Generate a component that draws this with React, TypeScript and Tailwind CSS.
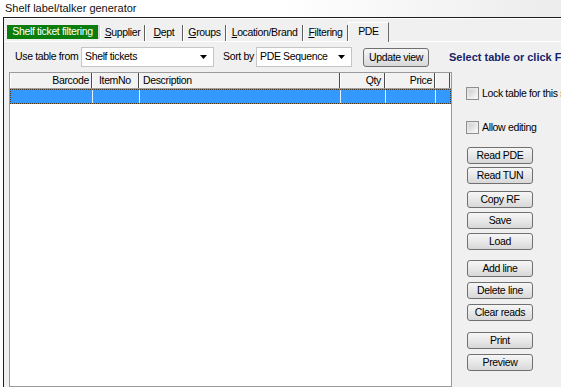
import { ReactNode } from "react";

type Tab = { label: string; accel?: number; width: number };

const tabs: Tab[] = [
  { label: "Supplier", accel: 0, width: 45 },
  { label: "Dept", accel: 0, width: 38 },
  { label: "Groups", accel: 0, width: 43 },
  { label: "Location/Brand", accel: 0, width: 77 },
  { label: "Filtering", accel: 0, width: 45 },
];

const columns = [
  { label: "Barcode", width: "w-[82px]", align: "justify-end pr-[2px]" },
  { label: "ItemNo", width: "w-[47px]", align: "justify-start pl-[6px]" },
  { label: "Description", width: "w-[201px]", align: "justify-start pl-[3px]" },
  { label: "Qty", width: "w-[45px]", align: "justify-end pr-[3px]" },
  { label: "Price", width: "w-[50px]", align: "justify-end pr-[2px]" },
  { label: "", width: "w-[15px]", align: "" },
];

// gap above each button, in px
const buttons = [
  { label: "Read PDE", gap: "mt-[13px]" },
  { label: "Read TUN", gap: "mt-[3px]" },
  { label: "Copy RF", gap: "mt-[7px]" },
  { label: "Save", gap: "mt-[4px]" },
  { label: "Load", gap: "mt-[4px]" },
  { label: "Add line", gap: "mt-[10px]" },
  { label: "Delete line", gap: "mt-[5px]" },
  { label: "Clear reads", gap: "mt-[5px]" },
  { label: "Print", gap: "mt-[11px]" },
  { label: "Preview", gap: "mt-[5px]" },
];

function Accel({ text, index }: { text: string; index?: number }) {
  if (index === undefined) return <>{text}</>;
  return (
    <>
      {text.slice(0, index)}
      <span className="underline underline-offset-[1px]">{text[index]}</span>
      {text.slice(index + 1)}
    </>
  );
}

function Button({ children, className = "" }: { children: ReactNode; className?: string }) {
  return (
    <div
      className={`w-[66px] h-[17px] shrink-0 flex items-center justify-center rounded-[3px] border border-[#707070] bg-gradient-to-b from-[#f6f6f6] via-[#e8e8e8] to-[#d8d8d8] text-black leading-none ${className}`}
    >
      {children}
    </div>
  );
}

function Combo({ value, width }: { value: string; width: string }) {
  return (
    <div
      className={`${width} h-[20px] shrink-0 flex items-center bg-white border border-[#c5c5c5] pl-[3px] pr-[6px]`}
    >
      <span className="flex-1 truncate">{value}</span>
      <svg width="7" height="4" viewBox="0 0 7 4">
        <path d="M0 0h7L3.5 4z" fill="#000" />
      </svg>
    </div>
  );
}

function CheckBox({ label, className = "" }: { label: string; className?: string }) {
  return (
    <div className={`h-[13px] flex items-center gap-[3px] whitespace-nowrap leading-[13px] ${className}`}>
      <div className="w-[13px] h-[13px] shrink-0 border border-[#8f8f8f] bg-gradient-to-br from-[#dcdcdc] to-[#f8f8f8] p-[2px]">
        <div className="w-full h-full bg-gradient-to-br from-[#d0d0d0] to-[#f4f4f4]" />
      </div>
      <span>{label}</span>
    </div>
  );
}

export default function App() {
  return (
    <div className="w-[561px] h-[387px] overflow-hidden bg-white flex flex-col font-['Liberation_Sans',Arial,sans-serif] text-[10.5px] tracking-[-0.35px] text-black">
      {/* caption */}
      <div className="h-[17px] shrink-0 flex items-center pl-[5px] text-[11px] tracking-normal text-[#111] bg-gradient-to-r from-white via-white to-[#ececec]">
        Shelf label/talker generator
      </div>

      <div className="flex-1 min-h-0 ml-[3px] border-l border-t border-[#1e1e1e] bg-[#f0f0f0] flex flex-col">
        {/* tab strip */}
        <div className="h-[23px] shrink-0 flex items-end pl-[3px] border-t border-white">
          <div className="w-[93px] h-[14px] mb-[2px] flex items-center justify-center bg-[#0b7d0b] text-white border-r-2 border-r-[#d8d8d8]">
            Shelf ticket filtering
          </div>
          {tabs.map((tab) => (
            <div
              key={tab.label}
              style={{ width: tab.width }}
              className="h-[16px] flex items-center justify-center border-l border-white border-r border-r-[#5f5f5f]"
            >
              <Accel text={tab.label} index={tab.accel} />
            </div>
          ))}
          <div className="w-[41px] h-[20px] -mb-px relative z-10 flex items-center justify-center bg-[#f0f0f0] border-l border-t border-white border-r border-r-[#6a6a6a] pb-[2px]">
            PDE
          </div>
        </div>

        {/* tab page */}
        <div className="flex-1 min-h-0 border-t border-white flex flex-col">
          <div className="h-[30px] shrink-0 flex items-center pl-[11px] whitespace-nowrap">
            <span className="w-[66px] shrink-0">Use table from</span>
            <Combo value="Shelf tickets" width="w-[133px]" />
            <span className="w-[33px] shrink-0 ml-[9px]">Sort by</span>
            <Combo value="PDE Sequence" width="w-[96px]" />
            <Button className="ml-[11px] h-[19px]">Update view</Button>
            <span className="ml-[20px] shrink-0 font-bold text-[11px] tracking-normal text-[#16236b]">
              Select table or click F
            </span>
          </div>

          <div className="flex-1 min-h-0 flex">
            {/* list view */}
            <div className="w-[443px] shrink-0 ml-[5px] border border-[#9a9a9a] bg-white flex flex-col">
              <div className="h-[16px] flex bg-[#f2f2f2] border-b border-[#a0a0a0]">
                {columns.map((col, i) => (
                  <div
                    key={i}
                    className={`${col.width} shrink-0 flex items-center border-l border-white border-r border-r-[#4a4a4a] ${col.align}`}
                  >
                    {col.label}
                  </div>
                ))}
              </div>
              <div className="h-[15px] flex bg-[#3399ff] border border-dotted border-[#4a3518]">
                {columns.map((col, i) => (
                  <div
                    key={i}
                    className={`${col.width} shrink-0 ${i < columns.length - 1 ? "border-r border-[#e6f2ff]" : ""}`}
                  />
                ))}
              </div>
            </div>

            {/* side panel */}
            <div className="flex-1 min-w-0 flex flex-col pl-[14px] pt-[15px]">
              <CheckBox label="Lock table for this s" />
              <CheckBox label="Allow editing" className="mt-[21px]" />
              <div className="pl-px flex flex-col">
                {buttons.map((b) => (
                  <Button key={b.label} className={b.gap}>
                    {b.label}
                  </Button>
                ))}
              </div>
            </div>
          </div>
        </div>
      </div>
    </div>
  );
}
